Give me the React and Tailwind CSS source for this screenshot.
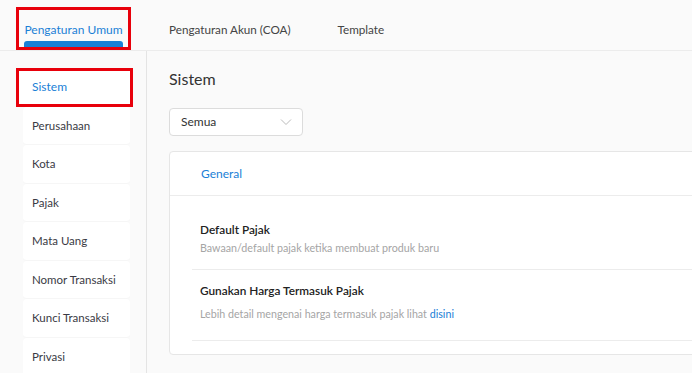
import React from "react";

const menu = ["Sistem","Perusahaan","Kota","Pajak","Mata Uang","Nomor Transaksi","Kunci Transaksi","Privasi"];

export default function App() {
  return (
    <div className="w-[692px] h-[373px] overflow-hidden bg-[#fafafa] text-[#333]" style={{fontFamily: "Lato, 'Noto Sans', sans-serif"}}>
      <div className="flex items-end h-[51px] border-b border-[#ececec] pl-[16px]">
        <div className="relative shrink-0 w-[115px] h-[43px] border-[3px] border-[#e8000b] flex flex-col items-center justify-between">
          <span className="text-[12px] text-[#1a80d6] mt-[11px]">Pengaturan Umum</span>
          <div className="w-[99px] h-[6px] bg-[#1a80d6] rounded-t-[3px]"></div>
        </div>
        <div className="flex h-full items-center gap-[47px] pl-[38px] pt-[9px] text-[11.7px] text-[#444]">
          <span>Pengaturan Akun (COA)</span>
          <span>Template</span>
        </div>
      </div>
      <div className="flex">
        <div className="w-[147px] shrink-0 pt-[17px] pl-[16px] border-r border-[#e4e4e4] h-[322px]">
          {menu.map((m, i) => (
            <div key={m} className={"h-[38.5px] flex items-center text-[11.5px] " + (i === 0 ? "border-[3px] border-[#e8000b] w-[117px] pl-[13px] text-[#1a80d6] bg-white text-[12px]" : "ml-[7px] w-[107px] pl-[9px] bg-white rounded-[4px] border-b border-[#f6f6f6] text-[#3a3a44]")}>
              {m}
            </div>
          ))}
        </div>
        <div className="flex-1 min-w-0 pl-[22px] pt-[17px]">
          <div className="text-[16px] text-[#333] h-[22px] leading-[22px]">Sistem</div>
          <div className="mt-[18px] w-[134px] h-[28px] rounded-[4px] border border-[#dcdcdc] bg-white flex items-center justify-between pl-[11px] pr-[10px] text-[12px] text-[#333]">
            <span>Semua</span>
            <svg width="12" height="8" viewBox="0 0 12 8" fill="none"><path d="M1 1.5 L6 6.5 L11 1.5" stroke="#bbb" strokeWidth="1"/></svg>
          </div>
          <div className="mt-[15px] h-[204px] border border-[#e6e6e6] rounded-[4px] bg-white w-[560px]">
            <div className="h-[44px] border-b border-[#ececec] flex items-center pl-[31px] text-[12px] text-[#1a80d6]">General</div>
            <div className="pl-[22px]">
              <div className="border-b border-[#ececec] h-[74px] pl-[8px] pt-[25px]">
                <div className="text-[11.8px] font-semibold text-[#222] leading-[18px]">Default Pajak</div>
                <div className="text-[10.7px] text-[#a5a5a5] leading-[18px]">Bawaan/default pajak ketika membuat produk baru</div>
              </div>
              <div className="border-b border-[#ececec] h-[71px] pl-[8px] pt-[12px]">
                <div className="text-[11.8px] font-semibold text-[#222] leading-[18px]">Gunakan Harga Termasuk Pajak</div>
                <div className="text-[10.7px] text-[#a5a5a5] leading-[18px] mt-[5px]">Lebih detail mengenai harga termasuk pajak lihat <span className="text-[#1a80d6]">disini</span></div>
              </div>
            </div>
          </div>
        </div>
      </div>
    </div>
  );
}
